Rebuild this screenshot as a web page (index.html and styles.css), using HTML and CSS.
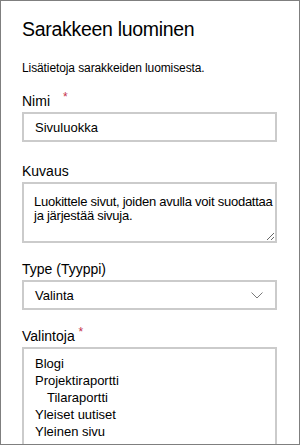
FILE: index.html
```html
<!DOCTYPE html>
<html lang="fi">
<head>
    <meta charset="UTF-8">
    <meta name="viewport" content="width=device-width, initial-scale=1.0">
    <title>Sarakkeen luominen</title>
    <link rel="stylesheet" href="styles.css">
</head>
<body>

<div class="panel">
    <h1>Sarakkeen luominen</h1>

    <p class="intro">Lisätietoja sarakkeiden luomisesta.</p>

    <!-- Nimi -->
    <label class="field-label" for="nameInput">Nimi <span class="required required-wide">*</span></label>
    <input id="nameInput" class="text-input" type="text" value="Sivuluokka">

    <!-- Kuvaus -->
    <label class="field-label label-desc" for="descInput">Kuvaus</label>
    <textarea id="descInput" class="text-area">Luokittele sivut, joiden avulla voit suodattaa ja järjestää sivuja.</textarea>

    <!-- Type -->
    <label class="field-label label-gap">Type (Tyyppi)</label>
    <div class="dropdown">
        <span>Valinta</span>
        <svg class="chevron" width="12" height="7" viewBox="0 0 12 7">
            <path d="M0.5 0.5 L6 6 L11.5 0.5" fill="none" stroke="#7a7a7a" stroke-width="1"/>
        </svg>
    </div>

    <!-- Valintoja -->
    <label class="field-label label-gap">Valintoja <span class="required">*</span></label>
    <div class="choices">
        <div>Blogi</div>
        <div>Projektiraportti</div>
        <div class="sub">Tilaraportti</div>
        <div>Yleiset uutiset</div>
        <div>Yleinen sivu</div>
    </div>
</div>

</body>
</html>
```

FILE: styles.css
```css
body {
    margin: 0;
    font-family: "Liberation Sans", Arial, sans-serif;
    color: #000;
}

.panel {
    box-sizing: border-box;
    width: 300px;
    height: 445px;
    border: 1px solid #7f7f7f;
    padding: 14px 21px 0 21px;
    overflow: hidden;
}

h1 {
    margin: 0;
    font-size: 19.5px;
    font-weight: normal;
    line-height: 28px;
    letter-spacing: -0.3px;
}

.intro {
    margin: 17px 0 0 0;
    font-size: 12px;
    line-height: 16px;
    letter-spacing: -0.1px;
}

.field-label {
    display: block;
    margin-top: 15px;
    margin-bottom: 1px;
    font-size: 14px;
    line-height: 20px;
}

.label-desc {
    margin-top: 19px;
}

.label-gap {
    margin-top: 16px;
}

.required {
    color: #c4314b;
    font-size: 12px;
    vertical-align: 5px;
    line-height: 0;
}

.required-wide {
    margin-left: 9px;
}

.text-input {
    display: block;
    box-sizing: border-box;
    width: 255px;
    height: 30px;
    margin: 0;
    padding: 0 11px;
    border: 2px solid #cbcbcb;
    font-family: inherit;
    font-size: 13px;
    color: #000;
    outline: none;
}

.text-area {
    display: block;
    box-sizing: border-box;
    width: 255px;
    height: 61px;
    margin: 0;
    padding: 11px 0 0 10px;
    border: 2px solid #cbcbcb;
    font-family: inherit;
    font-size: 13px;
    line-height: 14px;
    letter-spacing: -0.25px;
    color: #000;
    resize: vertical;
    outline: none;
}

.dropdown {
    box-sizing: border-box;
    width: 255px;
    height: 30px;
    border: 2px solid #cbcbcb;
    padding: 0 11px;
    display: flex;
    align-items: center;
    justify-content: space-between;
    font-size: 13px;
}

.chevron {
    margin-right: 1px;
}

.choices {
    box-sizing: border-box;
    width: 255px;
    height: 120px;
    border: 2px solid #cbcbcb;
    padding: 6px 11px;
    font-size: 13px;
    line-height: 17px;
}

.choices .sub {
    padding-left: 12px;
}
```
